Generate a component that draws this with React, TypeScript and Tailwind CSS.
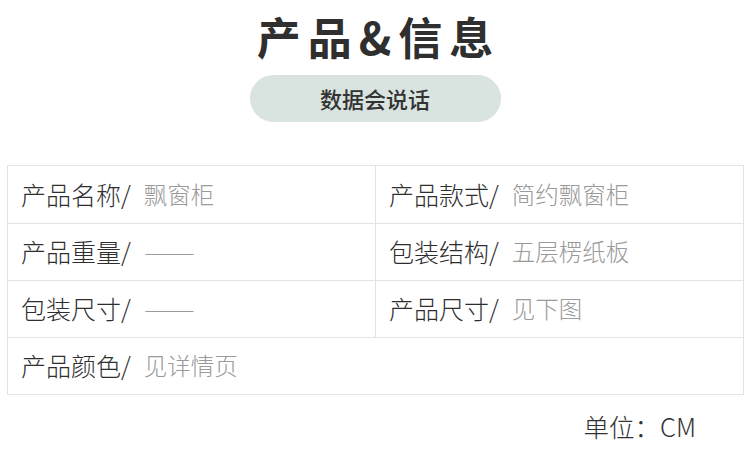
import React from 'react';

interface Cell {
  label: string;
  value: string;
}

const rows: Cell[][] = [
  [
    { label: '产品名称/', value: '飘窗柜' },
    { label: '产品款式/', value: '简约飘窗柜' },
  ],
  [
    { label: '产品重量/', value: '——' },
    { label: '包装结构/', value: '五层楞纸板' },
  ],
  [
    { label: '包装尺寸/', value: '——' },
    { label: '产品尺寸/', value: '见下图' },
  ],
  [{ label: '产品颜色/', value: '见详情页' }],
];

const InfoCell: React.FC<{ cell: Cell; wide?: boolean }> = ({ cell, wide }) => (
  <div className={`flex items-center pl-[13px] ${wide ? 'flex-1' : 'w-[367px]'}`}>
    <span className="text-[25px] font-light text-[#2e2e2e]">{cell.label}</span>
    <span
      className={`ml-[13px] text-[23.5px] font-light text-[#9a9a9a] ${
        cell.value === '——' ? 'tracking-[-3px] scale-x-[1.3] origin-left inline-block' : ''
      }`}
    >
      {cell.value}
    </span>
  </div>
);

const App: React.FC = () => {
  return (
    <div
      className="w-[750px] h-[456px] bg-white overflow-hidden"
      style={{ fontFamily: '"Noto Sans CJK SC", "Noto Sans", sans-serif' }}
    >
      {/* Header */}
      <div className="flex flex-col items-center pt-[8px]">
        <h1 className="text-[44px] leading-[56px] font-bold tracking-[7px] text-[#2f2f2f] pl-[7px]">
          产品&amp;信息
        </h1>
        <div className="mt-[11px] w-[251px] h-[47px] rounded-full bg-[#d9e3df] flex items-center justify-center">
          <span className="text-[22px] font-medium text-[#333333]">数据会说话</span>
        </div>
      </div>

      {/* Info table */}
      <div className="mx-[7px] mt-[43px] w-[737px] border border-[#e3e3e3]">
        {rows.map((row, i) => (
          <div
            key={i}
            className={`flex h-[57px] ${i > 0 ? 'border-t border-[#e3e3e3]' : ''}`}
          >
            {row.length === 2 ? (
              <>
                <InfoCell cell={row[0]} />
                <div className="w-px bg-[#e3e3e3]" />
                <InfoCell cell={row[1]} wide />
              </>
            ) : (
              <InfoCell cell={row[0]} wide />
            )}
          </div>
        ))}
      </div>

      <div className="flex justify-end pr-[54px] mt-[12px]">
        <span className="text-[25.5px] font-light text-[#333333]">单位：CM</span>
      </div>
    </div>
  );
};

export default App;
